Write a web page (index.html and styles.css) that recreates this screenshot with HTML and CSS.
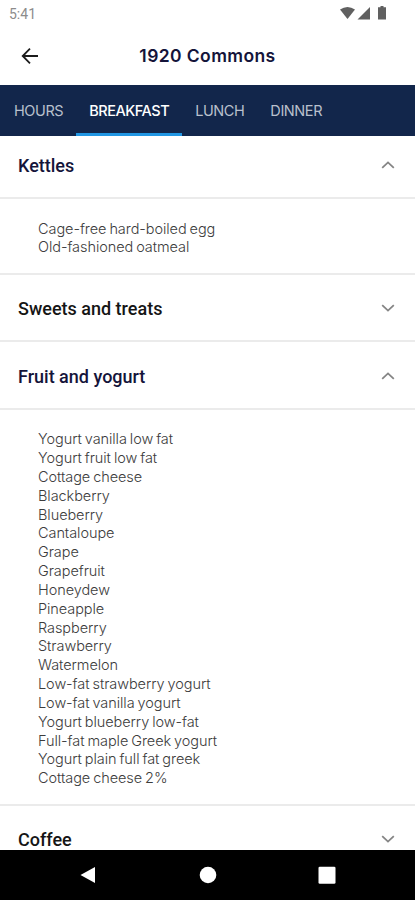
FILE: index.html
```html
<!DOCTYPE html>
<html lang="en">
<head>
    <meta charset="UTF-8">
    <meta name="viewport" content="width=device-width, initial-scale=1.0">
    <title>1920 Commons</title>
    <link rel="stylesheet" href="styles.css">
</head>
<body>
    <div class="status-bar">
        <span class="clock">5:41</span>
        <svg class="status-icons" width="48" height="16" viewBox="0 0 48 16">
            <path d="M0 3.5Q7.5-1.7 15 3.5L7.5 13z"/>
            <path d="M30 1v12.5H17.5z"/>
            <path d="M40.5 0h3v1.3H46v12.2h-8V1.3h2.5z"/>
        </svg>
    </div>

    <header class="app-bar">
        <svg class="back" width="20" height="20" viewBox="0 0 20 20">
            <path d="M18 10H3M10 2.7L2.7 10l7.3 7.3"/>
        </svg>
        <h1>1920 Commons</h1>
    </header>

    <nav class="tabs">
        <a class="tab">HOURS</a>
        <a class="tab active">BREAKFAST</a>
        <a class="tab">LUNCH</a>
        <a class="tab">DINNER</a>
    </nav>

    <main class="menu">
        <div class="section-header open first">
            <h2>Kettles</h2>
            <svg class="chevron" width="14" height="8" viewBox="0 0 14 8"><path d="M1.2 6.8L7 1.4l5.8 5.4"/></svg>
        </div>
        <ul class="items">
            <li>Cage-free hard-boiled egg</li>
            <li>Old-fashioned oatmeal</li>
        </ul>

        <div class="section-header">
            <h2>Sweets and treats</h2>
            <svg class="chevron" width="14" height="8" viewBox="0 0 14 8"><path d="M1.2 1.2L7 6.6l5.8-5.4"/></svg>
        </div>

        <div class="section-header open">
            <h2>Fruit and yogurt</h2>
            <svg class="chevron" width="14" height="8" viewBox="0 0 14 8"><path d="M1.2 6.8L7 1.4l5.8 5.4"/></svg>
        </div>
        <ul class="items">
            <li>Yogurt vanilla low fat</li>
            <li>Yogurt fruit low fat</li>
            <li>Cottage cheese</li>
            <li>Blackberry</li>
            <li>Blueberry</li>
            <li>Cantaloupe</li>
            <li>Grape</li>
            <li>Grapefruit</li>
            <li>Honeydew</li>
            <li>Pineapple</li>
            <li>Raspberry</li>
            <li>Strawberry</li>
            <li>Watermelon</li>
            <li>Low-fat strawberry yogurt</li>
            <li>Low-fat vanilla yogurt</li>
            <li>Yogurt blueberry low-fat</li>
            <li>Full-fat maple Greek yogurt</li>
            <li>Yogurt plain full fat greek</li>
            <li>Cottage cheese 2%</li>
        </ul>

        <div class="section-header">
            <h2>Coffee</h2>
            <svg class="chevron" width="14" height="8" viewBox="0 0 14 8"><path d="M1.2 1.2L7 6.6l5.8-5.4"/></svg>
        </div>
    </main>

    <footer class="nav-bar">
        <svg width="18" height="18" viewBox="0 0 18 18"><path d="M16 1v16L1.5 9z"/></svg>
        <svg width="18" height="18" viewBox="0 0 18 18"><circle cx="9" cy="9" r="8.3"/></svg>
        <svg width="18" height="18" viewBox="0 0 18 18"><rect x="0.5" y="0.7" width="17" height="17" rx="1.3"/></svg>
    </footer>
</body>
</html>
```

FILE: styles.css
```css
* {
    box-sizing: border-box;
}
body {
    display: flex;
    flex-direction: column;
    width: 415px;
    height: 900px;
    margin: 0;
    overflow: hidden;
    background: #fff;
    font-family: Roboto, sans-serif;
}
.status-bar {
    display: flex;
    justify-content: space-between;
    height: 28px;
    padding: 6px 27px 0 9px;
}
.clock {
    color: #8c8c8c;
    font-size: 14px;
    line-height: 16px;
}
.status-icons {
    fill: #606060;
}
.app-bar {
    display: grid;
    grid-template-columns: 60px 1fr 60px;
    align-items: center;
    height: 57px;
    padding-bottom: 2px;
}
.back {
    margin-left: 20px;
    fill: none;
    stroke: #1c1c1c;
    stroke-width: 1.8;
}
h1 {
    margin: 0;
    color: #14143a;
    font: 600 17.5px Inter, sans-serif;
    letter-spacing: 0.4px;
    text-align: center;
}
.tabs {
    display: flex;
    flex-shrink: 0;
    height: 51px;
    padding-left: 1px;
    background: #12264b;
}
.tab {
    padding: 1px 13px 0;
    color: #b9c0cd;
    font: 14.5px/50px Inter, sans-serif;
    letter-spacing: -0.42px;
    white-space: nowrap;
}
.tab.active {
    border-bottom: 3px solid #2196e3;
    color: #fff;
    font-weight: 500;
    letter-spacing: -0.47px;
}
.menu {
    flex: 1;
    min-height: 0;
    overflow: hidden;
}
.section-header {
    display: flex;
    justify-content: space-between;
    align-items: center;
    height: 67.6px;
    padding: 1px 20px 0 18px;
    border-bottom: 2px solid #ebebeb;
}
.section-header.first {
    height: 63px;
    padding: 0 20px 3px 18px;
}
h2 {
    margin: 0;
    padding-top: 2px;
    color: #151515;
    font-size: 18px;
    font-weight: 500;
    line-height: 20px;
}
.open h2 {
    color: #14143a;
}
.chevron {
    fill: none;
    stroke: #858585;
    stroke-width: 1.8;
}
.items {
    margin: 0;
    padding: 20.5px 38px 15.5px;
    border-bottom: 2px solid #ebebeb;
    color: #3c3c3c;
    font: 300 14.5px/18.83px Inter, sans-serif;
    letter-spacing: -0.07px;
    word-spacing: -1px;
    list-style: none;
}
.items:last-of-type {
    padding-bottom: 16px;
}
.nav-bar {
    display: flex;
    justify-content: space-between;
    align-items: center;
    height: 50px;
    padding: 0 79px;
    background: #000;
}
.nav-bar svg {
    fill: #fff;
}
```
